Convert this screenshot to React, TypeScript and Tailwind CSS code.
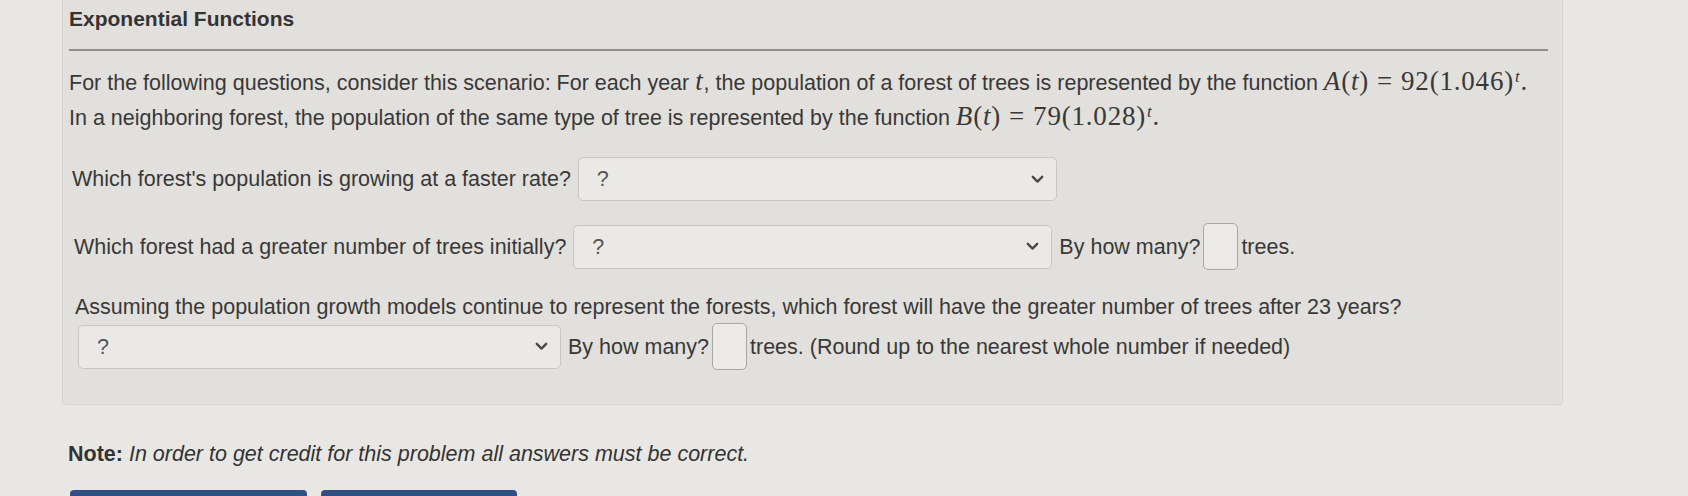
import React from "react";

function Chevron() {
  return (
    <svg width="13" height="9" viewBox="0 0 13 9" className="text-[#4a4a4a]">
      <path d="M1.8 1.8 L6.5 6.6 L11.2 1.8" fill="none" stroke="currentColor" strokeWidth="2.4" strokeLinecap="round" strokeLinejoin="round" />
    </svg>
  );
}

function Select({ width }: { width: string }) {
  return (
    <div className={`${width} h-[44px] flex items-center justify-between pl-[18px] pr-[12px] bg-[#eae9e6] border border-[#c9c7c3] rounded-[5px] text-[#555]`}>
      <span>?</span>
      <Chevron />
    </div>
  );
}

function Blank() {
  return <div className="w-[35px] h-[47px] bg-[#ebeae7] border border-[#a9a7a3] rounded-[5px] mx-[3px]" />;
}

function M({ children }: { children: React.ReactNode }) {
  return <span className="font-['Liberation_Serif'] text-[27px] leading-[20px] tracking-[0.8px]">{children}</span>;
}

function Eq() {
  return <span className="mx-[8px]">=</span>;
}

function Sup() {
  return <sup className="text-[17px] ml-[1px]"><i>t</i></sup>;
}

export default function App() {
  return (
    <div className="w-[1688px] h-[496px] overflow-hidden bg-[#e8e7e4] font-['Liberation_Sans',sans-serif] text-[#393836]">
      <div className="ml-[62px] w-[1501px] h-[405px] bg-[#e1e0dd] border-x border-b border-[#d6d5d2] rounded-b-[4px] pl-[6px] pr-[14px]">
        <h1 className="pt-[6px] pb-[17px] text-[21px] font-bold text-[#353432] leading-[26px]">Exponential Functions</h1>
        <div className="border-t-2 border-[#8f8e8b]" />

        <p className="mt-[15px] text-[21.5px] leading-[35px]">
          For the following questions, consider this scenario: For each year <M><i>t</i></M>, the population of a forest of trees is
          represented by the function <M><i>A</i>(<i>t</i>)<Eq />92(1.046)<Sup />.</M>
          <br />
          In a neighboring forest, the population of the same type of tree is represented by the function{" "}
          <M><i>B</i>(<i>t</i>)<Eq />79(1.028)<Sup />.</M>
        </p>

        <div className="pl-[3px] text-[21.5px] leading-[26px]">
          <div className="mt-[21px] flex items-center gap-[7px]">
            <span>Which forest's population is growing at a faster rate?</span>
            <Select width="w-[479px]" />
          </div>

          <div className="mt-[22px] flex items-center">
            <span className="pl-[2px] mr-[7px]">Which forest had a greater number of trees initially?</span>
            <Select width="w-[479px]" />
            <span className="ml-[7px]">By how many?</span>
            <Blank />
            <span>trees.</span>
          </div>

          <div className="mt-[24px] pl-[3px]">Assuming the population growth models continue to represent the forests, which forest will have the greater number of trees after 23 years?</div>
          <div className="mt-[3px] pl-[6px] flex items-center">
            <Select width="w-[483px]" />
            <span className="ml-[7px]">By how many?</span>
            <Blank />
            <span>trees. (Round up to the nearest whole number if needed)</span>
          </div>
        </div>
      </div>

      <p className="mt-[36px] ml-[68px] text-[21.5px] leading-[26px] text-[#333]">
        <b>Note:</b> <i>In order to get credit for this problem all answers must be correct.</i>
      </p>

      <div className="mt-[23px] ml-[70px] flex gap-[14px]">
        <div className="w-[237px] h-[30px] rounded-t-[4px] bg-[#2f4f86]" />
        <div className="w-[196px] h-[30px] rounded-t-[4px] bg-[#2f4f86]" />
      </div>
    </div>
  );
}
